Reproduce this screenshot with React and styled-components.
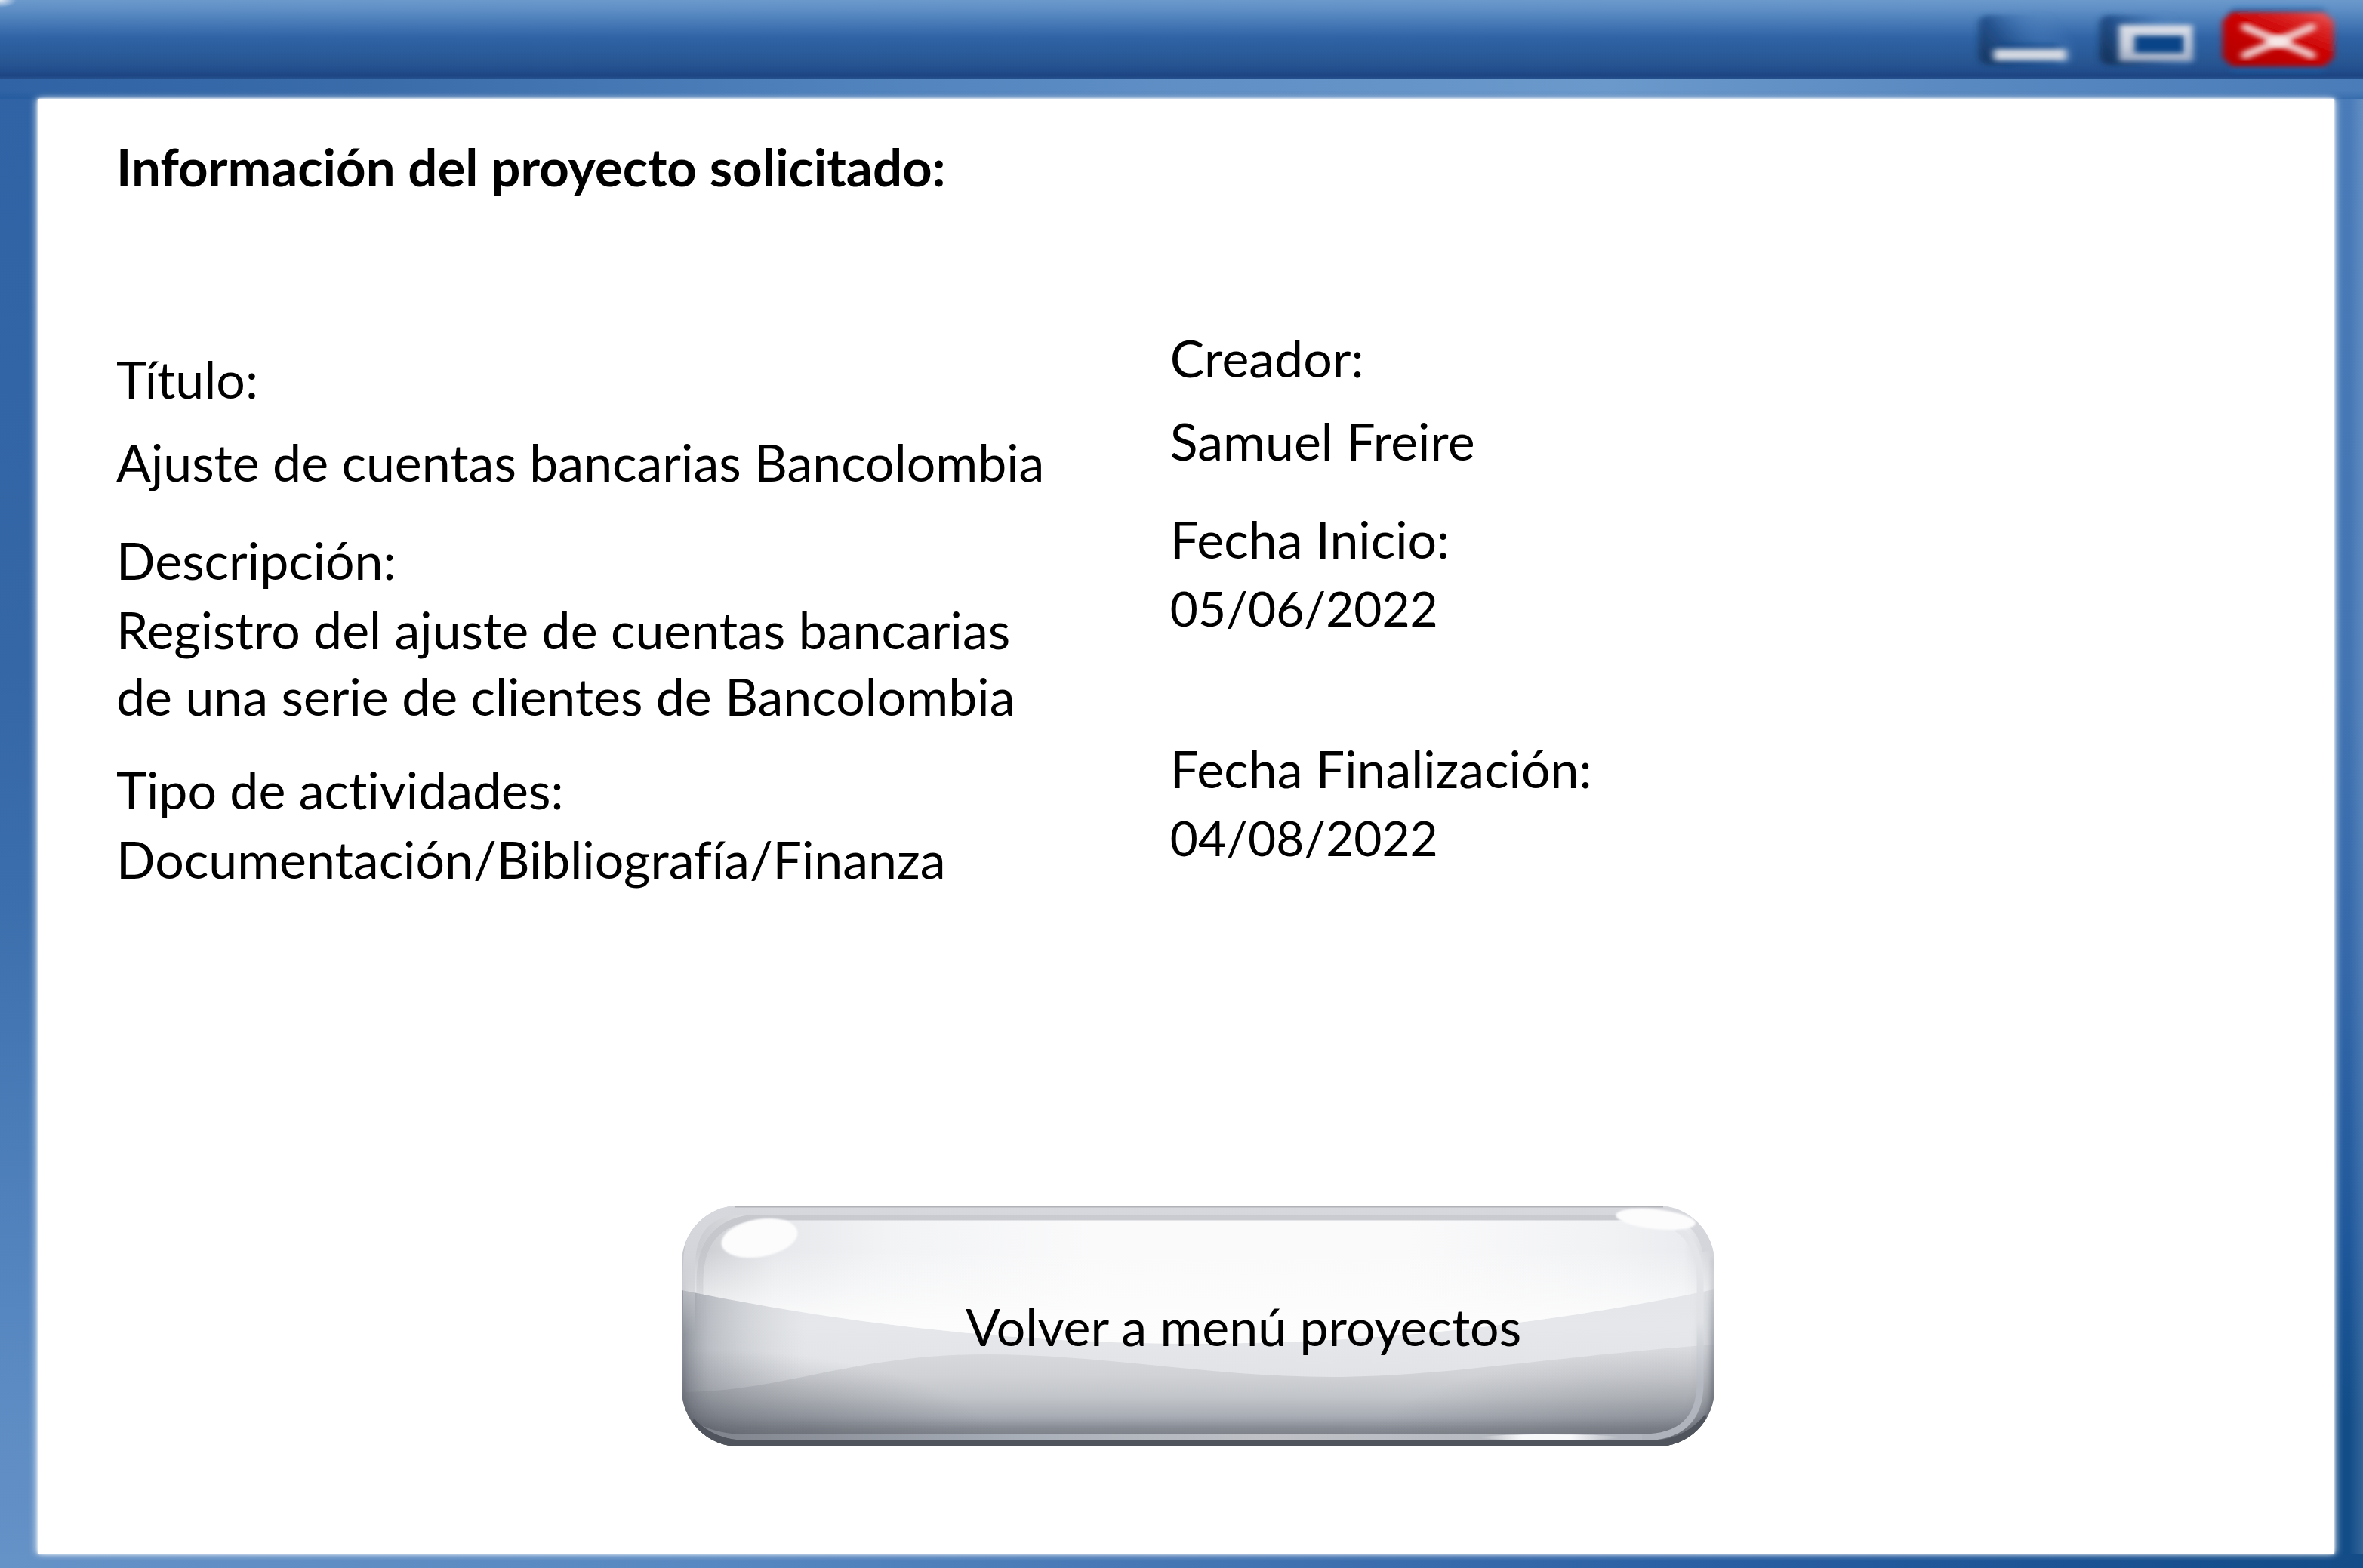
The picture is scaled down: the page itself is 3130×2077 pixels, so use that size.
import React from "react";
import styled, { createGlobalStyle } from "styled-components";

const GlobalStyle = createGlobalStyle`
  *, *::before, *::after { box-sizing: border-box; }
  body {
    margin: 0;
    background: #ffffff;
    color: #000000;
    font-family: Lato, "Liberation Sans", sans-serif;
    font-size: 68px;
    line-height: 88px;
    font-variant-ligatures: none;
  }
`;

const Window = styled.div`
  min-height: 100vh;
  display: flex;
  flex-direction: column;
`;

const TitleBar = styled.header`
  height: 104px;
  display: flex;
  justify-content: flex-end;
  align-items: center;
  gap: 28px;
  padding: 0 37px 0 0;
  background:
    radial-gradient(ellipse 22px 10px at 0 0, #dfe8f3, transparent),
    linear-gradient(#6b99cc 0, #5f8fc5 12px, #4578b5 32px, #2f63a5 50px, #285794 80px, #224d8c 94px, #1e4482 100px, #23508e 104px);
`;

const ControlButton = styled.button`
  width: ${(p) => p.$width}px;
  height: 76px;
  padding: 0;
  border: 0;
  background: none;
  cursor: pointer;

  svg {
    display: block;
    width: 100%;
    height: 100%;
    overflow: visible;
  }
`;

const Frame = styled.div`
  flex: 1;
  display: flex;
  padding: 27px 38px 19px 50px;
  background:
    linear-gradient(rgba(20, 80, 150, 0), rgba(20, 80, 150, 0) 60%, rgba(20, 80, 150, 0.35)) top / 100% 27px no-repeat,
    linear-gradient(90deg, #2f63a5, #3a6caa 16%, #4c7eba 32%, #5f8fc5 50%, #6b99cc 68%, #5a8ac1 82%, #4a7cb9) top / 100% 27px no-repeat,
    linear-gradient(90deg, #6592c7, #5888c1 30%, #4576b4 50%, #2c61a5 70%, #1c5496 86%, #134c87) bottom / 100% 19px no-repeat,
    linear-gradient(90deg, rgba(255, 255, 255, 0), rgba(255, 255, 255, 0.13)) right / 18px 100% no-repeat,
    linear-gradient(#2f63a5, #3567a6 40%, #3b6eac 55%, #4a7cb8 70%, #5c8bc3 88%, #6592c7) left / 50px 100% no-repeat,
    linear-gradient(#4a7cb9, #4375b3 40%, #3468a9 60%, #1f589b 78%, #134d88 90%) right / 38px 100% no-repeat;
`;

const Content = styled.main`
  flex: 1;
  display: flex;
  flex-direction: column;
  padding: 46px 104px 142px;
  background: #ffffff;
  box-shadow: 0 0 3px #ffffff, -3px 0 9px rgba(255, 255, 255, 0.6), 3px 0 9px rgba(255, 255, 255, 0.6);
`;

const Heading = styled.h1`
  margin: 0;
  font-size: 69px;
  line-height: 88px;
  font-weight: 700;
`;

const Details = styled.div`
  display: grid;
  grid-template-columns: 33fr 34fr;
  padding-top: 165px;
`;

const Column = styled.dl`
  display: flex;
  flex-direction: column;
  gap: 36px;
  margin: 0;
  padding-top: ${(p) => (p.$lowered ? 28 : 0)}px;
`;

const Field = styled.div`
  display: flex;
  flex-direction: column;
  gap: ${(p) => (p.$spacious ? 22 : 4)}px;
  min-height: ${(p) => (p.$tall ? 268 : 0)}px;
  padding-bottom: ${(p) => (p.$spacious ? 6 : 0)}px;
`;

const Term = styled.dt`
  margin: 0;
`;

const Value = styled.dd`
  margin: 0;
  font-size: ${(p) => (p.$numeric ? 64 : 68)}px;
`;

const Line = styled.span`
  display: block;
`;

const Actions = styled.footer`
  display: flex;
  justify-content: center;
  margin-top: auto;
  padding: 64px 0 0 32px;
`;

const GlassButton = styled.button`
  position: relative;
  width: 1368px;
  max-width: 100%;
  height: 319px;
  padding: 0 0 0 120px;
  border: 0;
  border-radius: 76px;
  background: none;
  color: #000000;
  font: inherit;
  cursor: pointer;
`;

const Gloss = styled.svg`
  position: absolute;
  inset: 0;
  width: 100%;
  height: 100%;
`;

const Caption = styled.span`
  position: relative;
`;

function MinimizeIcon() {
  return (
    <svg viewBox="0 0 132 76" aria-hidden="true">
      <defs>
        <linearGradient id="minFace" x1="0" y1="0.7" x2="1" y2="0.2">
          <stop offset="0" stopColor="#183a68" />
          <stop offset="0.3" stopColor="#24528e" />
          <stop offset="0.6" stopColor="#4175b4" stopOpacity="0.6" />
          <stop offset="0.9" stopColor="#5c8cc4" stopOpacity="0" />
        </linearGradient>
        <filter id="minSoft" x="-20%" y="-50%" width="140%" height="200%"><feGaussianBlur stdDeviation="5 3" /></filter>
      </defs>
      <rect x="4" y="6" width="124" height="66" rx="12" fill="url(#minFace)" filter="url(#minSoft)" />
      <rect x="30" y="44" width="80" height="28" rx="6" fill="#0d4384" opacity="0.6" filter="url(#minSoft)" />
      <rect x="24" y="51" width="96" height="15" rx="3" fill="#d3d8e1" filter="url(#minSoft)" />
    </svg>
  );
}

function MaximizeIcon() {
  return (
    <svg viewBox="0 0 136 76" aria-hidden="true">
      <defs>
        <linearGradient id="maxFace" x1="0" y1="0.7" x2="1" y2="0.2">
          <stop offset="0" stopColor="#163660" />
          <stop offset="0.35" stopColor="#24528e" />
          <stop offset="0.7" stopColor="#4478b6" stopOpacity="0.6" />
          <stop offset="0.9" stopColor="#5c8cc4" stopOpacity="0" />
        </linearGradient>
        <linearGradient id="maxRing" x1="0" y1="0" x2="0" y2="1">
          <stop offset="0" stopColor="#dbdfe8" />
          <stop offset="0.6" stopColor="#c9cfdc" />
          <stop offset="1" stopColor="#9ba8c0" />
        </linearGradient>
        <filter id="maxSoft" x="-20%" y="-20%" width="140%" height="140%"><feGaussianBlur stdDeviation="5 3" /></filter>
        <filter id="ringSoft" x="-20%" y="-20%" width="140%" height="140%"><feGaussianBlur stdDeviation="4 3" /></filter>
      </defs>
      <rect x="4" y="6" width="126" height="66" rx="12" fill="url(#maxFace)" filter="url(#maxSoft)" />
      <rect x="50" y="33" width="66" height="26" fill="#0a4488" />
      <path fillRule="evenodd" fill="url(#maxRing)" filter="url(#ringSoft)" d="M30 19H127V67H30Z M50 33V56H116V33Z" />
    </svg>
  );
}

function CloseIcon() {
  return (
    <svg viewBox="0 0 152 76" aria-hidden="true">
      <defs>
        <linearGradient id="closeFace" x1="0.2" y1="1" x2="1" y2="0">
          <stop offset="0" stopColor="#b30000" />
          <stop offset="0.5" stopColor="#cc0000" />
          <stop offset="0.8" stopColor="#de2c2c" />
          <stop offset="1" stopColor="#f06a6a" />
        </linearGradient>
        <filter id="closeSoft" x="-20%" y="-20%" width="140%" height="140%"><feGaussianBlur stdDeviation="4 3" /></filter>
      </defs>
      <rect x="12" y="-4" width="128" height="86" rx="8" fill="#1261a8" opacity="0.6" filter="url(#closeSoft)" />
      <path fill="url(#closeFace)" filter="url(#closeSoft)" d="M15 2H138L150 14V62L138 74H15L3 62V14Z" />
      <path stroke="#efc4c4" strokeWidth="11" strokeLinecap="round" filter="url(#closeSoft)" d="M33 22L121 59M121 22L33 59" />
      <ellipse cx="77" cy="41" rx="15" ry="8" fill="#f6e6e6" filter="url(#closeSoft)" />
    </svg>
  );
}

function GlossArtwork() {
  return (
    <Gloss viewBox="0 0 1368 319" preserveAspectRatio="none" aria-hidden="true">
      <defs>
        <clipPath id="shell"><rect width="1368" height="319" rx="76" /></clipPath>
        <clipPath id="body"><path d="M0 112Q684 254 1368 111V319H0Z" /></clipPath>
        <linearGradient id="upper" x1="0" y1="0" x2="1" y2="0">
          <stop offset="0" stopColor="#c4c6cc" />
          <stop offset="0.04" stopColor="#d3d5d9" />
          <stop offset="0.09" stopColor="#e6e8eb" />
          <stop offset="0.2" stopColor="#f2f3f5" />
          <stop offset="0.4" stopColor="#fafafb" />
          <stop offset="0.7" stopColor="#fafafb" />
          <stop offset="0.9" stopColor="#f1f2f4" />
          <stop offset="0.97" stopColor="#eaecef" />
          <stop offset="1" stopColor="#d0d2d7" />
        </linearGradient>
        <linearGradient id="upperGlow" x1="0" y1="60" x2="0" y2="150" gradientUnits="userSpaceOnUse">
          <stop offset="0" stopColor="#fdfdfd" stopOpacity="0" />
          <stop offset="1" stopColor="#fdfdfd" stopOpacity="0.85" />
        </linearGradient>
        <linearGradient id="middle" x1="0" y1="0" x2="0" y2="1">
          <stop offset="0" stopColor="#e0e2e6" />
          <stop offset="0.5" stopColor="#e5e7ea" />
          <stop offset="1" stopColor="#dcdee2" />
        </linearGradient>
        <linearGradient id="lower" x1="0" y1="184" x2="0" y2="319" gradientUnits="userSpaceOnUse">
          <stop offset="0" stopColor="#d9dbdf" />
          <stop offset="0.3" stopColor="#d0d2d6" />
          <stop offset="0.52" stopColor="#c1c4c8" />
          <stop offset="0.7" stopColor="#a9adb5" />
          <stop offset="0.82" stopColor="#8b8f97" />
          <stop offset="1" stopColor="#858992" />
        </linearGradient>
        <linearGradient id="leftShade" x1="0" y1="0" x2="1" y2="0">
          <stop offset="0" stopColor="#757a84" stopOpacity="0.7" />
          <stop offset="0.025" stopColor="#858a93" stopOpacity="0.45" />
          <stop offset="0.06" stopColor="#a0a4ab" stopOpacity="0.3" />
          <stop offset="0.12" stopColor="#b5b8be" stopOpacity="0" />
        </linearGradient>
        <radialGradient id="cornerLeft" cx="0" cy="0" r="1" gradientUnits="userSpaceOnUse" gradientTransform="translate(0 319) scale(420 130)">
          <stop offset="0" stopColor="#50545d" stopOpacity="0.75" />
          <stop offset="0.5" stopColor="#60646d" stopOpacity="0.35" />
          <stop offset="1" stopColor="#6a6e77" stopOpacity="0" />
        </radialGradient>
        <radialGradient id="cornerRight" cx="0" cy="0" r="1" gradientUnits="userSpaceOnUse" gradientTransform="translate(1368 319) scale(460 130)">
          <stop offset="0" stopColor="#60646d" stopOpacity="0.5" />
          <stop offset="1" stopColor="#6a6e77" stopOpacity="0" />
        </radialGradient>
        <linearGradient id="sideFade" x1="0" y1="90" x2="0" y2="319" gradientUnits="userSpaceOnUse">
          <stop offset="0" stopColor="#9a9ea6" stopOpacity="0.25" />
          <stop offset="0.5" stopColor="#7f848e" stopOpacity="0.75" />
          <stop offset="1" stopColor="#4c5058" />
        </linearGradient>
        <linearGradient id="rim" x1="0" y1="0" x2="0" y2="170" gradientUnits="userSpaceOnUse">
          <stop offset="0" stopColor="#d7d8dd" />
          <stop offset="0.4" stopColor="#d4d5da" />
          <stop offset="1" stopColor="#c4c6cb" stopOpacity="0" />
        </linearGradient>
        <linearGradient id="rimInner" x1="0" y1="0" x2="0" y2="170" gradientUnits="userSpaceOnUse">
          <stop offset="0" stopColor="#c7c8ce" />
          <stop offset="1" stopColor="#b4b7bd" stopOpacity="0" />
        </linearGradient>
        <linearGradient id="ledge" x1="0" y1="0" x2="1" y2="0">
          <stop offset="0" stopColor="#7d828b" />
          <stop offset="0.35" stopColor="#aab0b9" />
          <stop offset="0.6" stopColor="#bfc1c6" />
          <stop offset="1" stopColor="#b2b7bf" />
        </linearGradient>
        <linearGradient id="gleam" x1="0" y1="0" x2="1" y2="0">
          <stop offset="0" stopColor="#f3f5f7" stopOpacity="0" />
          <stop offset="0.3" stopColor="#f7f8fa" />
          <stop offset="0.65" stopColor="#f7f8fa" />
          <stop offset="1" stopColor="#f3f5f7" stopOpacity="0" />
        </linearGradient>
        <linearGradient id="innerEdge" x1="0" y1="28" x2="0" y2="307" gradientUnits="userSpaceOnUse">
          <stop offset="0" stopColor="#e4e6ea" />
          <stop offset="0.45" stopColor="#dfe1e5" />
          <stop offset="0.75" stopColor="#b4b8c0" />
          <stop offset="1" stopColor="#aeb3bb" />
        </linearGradient>
        <filter id="soft10" x="-20%" y="-20%" width="140%" height="140%"><feGaussianBlur stdDeviation="10" /></filter>
        <filter id="soft3" x="-20%" y="-20%" width="140%" height="140%"><feGaussianBlur stdDeviation="3" /></filter>
        <filter id="soft1"><feGaussianBlur stdDeviation="1" /></filter>
      </defs>
      <g clipPath="url(#shell)">
        <rect width="1368" height="319" fill="url(#middle)" />
        <path fill="url(#upper)" d="M0 0H1368V111Q684 254 0 112Z" />
        <path fill="url(#upperGlow)" d="M0 19H1368V111Q684 254 0 112Z" />
        <path fill="url(#lower)" d="M0 247C130 247 230 197 401 197C560 197 700 227 861 227C1010 227 1150 200 1368 184V319H0Z" />
        <g clipPath="url(#body)">
          <rect width="1368" height="319" fill="url(#leftShade)" />
          <rect width="1368" height="319" fill="url(#cornerLeft)" />
          <rect width="1368" height="319" fill="url(#cornerRight)" />
          <path fill="none" stroke="url(#sideFade)" strokeWidth="24" opacity="0.55" filter="url(#soft10)" d="M0 90V243Q0 319 76 319H1292Q1368 319 1368 243V90" />
        </g>
        <path fill="none" stroke="url(#sideFade)" strokeWidth="10" filter="url(#soft3)" d="M0 70V243Q0 319 76 319H1292Q1368 319 1368 243V70" />
        <path fill="none" stroke="url(#rimInner)" strokeWidth="9" d="M24 180V100Q24 15 112 15H1260" />
        <path fill="none" stroke="url(#rim)" strokeWidth="16" d="M10 180V80Q10 4 84 4H1290Q1350 8 1360 60" />
        <path fill="none" stroke="#b0b2b8" strokeWidth="3" d="M70 1H1300" />
        <path fill="none" stroke="url(#innerEdge)" strokeWidth="9" d="M1318 30Q1349 50 1349 100V235Q1349 307 1272 307H1200" />
        <path fill="url(#ledge)" d="M24 290Q50 303 86 303H1272V311H86Q50 311 24 290Z" />
        <path fill="#50545c" d="M16 282Q44 311 86 311H1290Q1330 308 1356 276L1368 319H0Z" />
        <ellipse cx="1150" cy="307" rx="92" ry="4" fill="url(#gleam)" />
      </g>
      <ellipse cx="103" cy="43" rx="51" ry="25" fill="#fcfcfd" transform="rotate(-10 103 43)" filter="url(#soft1)" />
      <ellipse cx="1290" cy="18" rx="53" ry="13" fill="#fcfcfd" transform="rotate(6 1290 18)" filter="url(#soft1)" />
    </Gloss>
  );
}

export default function App() {
  return (
    <>
      <GlobalStyle />
      <Window>
        <TitleBar>
          <ControlButton type="button" $width={132} aria-label="Minimizar"><MinimizeIcon /></ControlButton>
          <ControlButton type="button" $width={136} aria-label="Maximizar"><MaximizeIcon /></ControlButton>
          <ControlButton type="button" $width={152} aria-label="Cerrar"><CloseIcon /></ControlButton>
        </TitleBar>
        <Frame>
          <Content>
            <Heading>Información del proyecto solicitado:</Heading>
            <Details>
              <Column $lowered>
                <Field $spacious>
                  <Term>Título:</Term>
                  <Value>Ajuste de cuentas bancarias Bancolombia</Value>
                </Field>
                <Field $tall>
                  <Term>Descripción:</Term>
                  <Value>
                    <Line>Registro del ajuste de cuentas bancarias</Line>
                    <Line>de una serie de clientes de Bancolombia</Line>
                  </Value>
                </Field>
                <Field>
                  <Term>Tipo de actividades:</Term>
                  <Value>Documentación/Bibliografía/Finanza</Value>
                </Field>
              </Column>
              <Column>
                <Field $spacious>
                  <Term>Creador:</Term>
                  <Value>Samuel Freire</Value>
                </Field>
                <Field $tall>
                  <Term>Fecha Inicio:</Term>
                  <Value $numeric>05/06/2022</Value>
                </Field>
                <Field>
                  <Term>Fecha Finalización:</Term>
                  <Value $numeric>04/08/2022</Value>
                </Field>
              </Column>
            </Details>
            <Actions>
              <GlassButton type="button">
                <GlossArtwork />
                <Caption>Volver a menú proyectos</Caption>
              </GlassButton>
            </Actions>
          </Content>
        </Frame>
      </Window>
    </>
  );
}
